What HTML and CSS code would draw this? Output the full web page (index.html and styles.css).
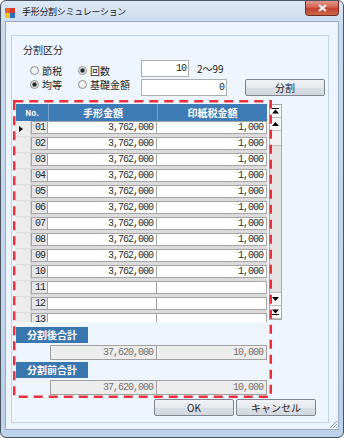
FILE: index.html
```html
<!DOCTYPE html>
<html lang="ja">
<head>
<meta charset="UTF-8" />
<meta name="viewport" content="width=device-width, initial-scale=1.0"/>
<title>手形分割シミュレーション</title>
<link rel="stylesheet" href="styles.css">
</head>
<body>
<div class="janela">
  <div class="barra-titulo">
    <svg class="icone" width="10" height="10" viewBox="0 0 10 10">
      <rect x="0" y="0" width="5" height="5" fill="#e8622a"/>
      <rect x="5" y="0" width="5" height="5" fill="#d23a2a"/>
      <rect x="0" y="5" width="5" height="5" fill="#f4c21c"/>
      <rect x="5" y="5" width="5" height="5" fill="#2f6fc2"/>
    </svg>
    <span class="titulo">手形分割シミュレーション</span>
    <div class="fechar">
      <svg width="9" height="8" viewBox="0 0 9 8"><path d="M1 1 L8 7 M8 1 L1 7" stroke="#fff" stroke-width="2"/></svg>
    </div>
  </div>

  <div class="cliente">
    <div class="painel">
      <div class="legenda">分割区分</div>

      <div class="linha-divisao">
        <div class="radios">
          <label class="radio"><span class="bolinha"></span>節税</label>
          <label class="radio"><span class="bolinha marcada"></span>回数</label>
          <label class="radio"><span class="bolinha marcada"></span>均等</label>
          <label class="radio"><span class="bolinha"></span>基礎金額</label>
        </div>
        <div class="campos">
          <div class="campo-linha">
            <div class="caixa caixa-curta">10</div>
            <span class="faixa">2〜99</span>
          </div>
          <div class="campo-linha campo-linha2">
            <div class="caixa caixa-longa">0</div>
            <button class="botao botao-dividir">分割</button>
          </div>
        </div>
      </div>

      <div class="grade">
        <div class="grade-corpo">
          <div class="cabecalho">
            <div class="cab-no">No.</div>
            <div class="cab">手形金額</div>
            <div class="cab">印紙税金額</div>
          </div>
          <div class="linha"><div class="seletor"><span class="seta"></span></div><div class="celula num">01</div><div class="celula">3,762,000</div><div class="celula">1,000</div></div>
          <div class="linha"><div class="seletor"></div><div class="celula num">02</div><div class="celula">3,762,000</div><div class="celula">1,000</div></div>
          <div class="linha"><div class="seletor"></div><div class="celula num">03</div><div class="celula">3,762,000</div><div class="celula">1,000</div></div>
          <div class="linha"><div class="seletor"></div><div class="celula num">04</div><div class="celula">3,762,000</div><div class="celula">1,000</div></div>
          <div class="linha"><div class="seletor"></div><div class="celula num">05</div><div class="celula">3,762,000</div><div class="celula">1,000</div></div>
          <div class="linha"><div class="seletor"></div><div class="celula num">06</div><div class="celula">3,762,000</div><div class="celula">1,000</div></div>
          <div class="linha"><div class="seletor"></div><div class="celula num">07</div><div class="celula">3,762,000</div><div class="celula">1,000</div></div>
          <div class="linha"><div class="seletor"></div><div class="celula num">08</div><div class="celula">3,762,000</div><div class="celula">1,000</div></div>
          <div class="linha"><div class="seletor"></div><div class="celula num">09</div><div class="celula">3,762,000</div><div class="celula">1,000</div></div>
          <div class="linha"><div class="seletor"></div><div class="celula num">10</div><div class="celula">3,762,000</div><div class="celula">1,000</div></div>
          <div class="linha"><div class="seletor"></div><div class="celula num">11</div><div class="celula"></div><div class="celula"></div></div>
          <div class="linha"><div class="seletor"></div><div class="celula num">12</div><div class="celula"></div><div class="celula"></div></div>
          <div class="linha"><div class="seletor"></div><div class="celula num">13</div><div class="celula"></div><div class="celula"></div></div>
        </div>
        <div class="rolagem">
          <div class="rol-botao">
            <svg width="7" height="6" viewBox="0 0 7 6"><rect x="0" y="0" width="7" height="1" fill="#000"/><path d="M3.5 1.5 L7 5.5 L0 5.5 Z" fill="#000"/></svg>
          </div>
          <div class="rol-botao">
            <svg width="7" height="4" viewBox="0 0 7 4"><path d="M3.5 0 L7 4 L0 4 Z" fill="#000"/></svg>
          </div>
          <div class="rol-polegar"></div>
          <div class="rol-trilho"></div>
          <div class="rol-botao">
            <svg width="7" height="4" viewBox="0 0 7 4"><path d="M0 0 L7 0 L3.5 4 Z" fill="#000"/></svg>
          </div>
          <div class="rol-botao">
            <svg width="7" height="6" viewBox="0 0 7 6"><path d="M0 0.5 L7 0.5 L3.5 4.5 Z" fill="#000"/><rect x="0" y="5" width="7" height="1" fill="#000"/></svg>
          </div>
        </div>
      </div>

      <div class="totais">
        <div class="total-rotulo">分割後合計</div>
        <div class="total-valores">
          <div class="total-caixa total-a">37,620,000</div>
          <div class="total-caixa total-b">10,000</div>
        </div>
        <div class="total-rotulo">分割前合計</div>
        <div class="total-valores">
          <div class="total-caixa total-a">37,620,000</div>
          <div class="total-caixa total-b">10,000</div>
        </div>
      </div>

      <div class="rodape">
        <button class="botao">OK</button>
        <button class="botao">キャンセル</button>
      </div>

      <svg class="marca" width="259" height="298" viewBox="0 0 259 298">
        <rect x="1.25" y="1.25" width="256.5" height="295.5" fill="none" stroke="#e8313a" stroke-width="2.5" stroke-dasharray="9 6"/>
      </svg>
    </div>

    <svg class="alca" width="9" height="9" viewBox="0 0 9 9">
      <path d="M8 1 L1 8 M8 4 L4 8 M8 7 L7 8" stroke="#8c9aab" stroke-width="1"/>
    </svg>
  </div>
</div>
</body>
</html>
```

FILE: styles.css
```css
* {
  box-sizing: border-box;
}
body {
  margin: 0;
  width: 344px;
  height: 438px;
  overflow: hidden;
  font-family: "Noto Sans CJK JP", sans-serif;
  font-size: 10px;
  color: #1e1e1e;
  background: #ffffff;
}
.janela {
  width: 344px;
  height: 438px;
  border: 1px solid #4a5360;
  border-radius: 6px;
  background: linear-gradient(180deg, #dce8f5 0, #cbdcef 22px, #bcd1ea 100%);
  display: flex;
  flex-direction: column;
}
.barra-titulo {
  height: 20px;
  display: flex;
  align-items: flex-start;
  padding-left: 4px;
}
.icone {
  margin-top: 7px;
  flex: none;
}
.titulo {
  margin-left: 7px;
  line-height: 22px;
  font-size: 9px;
  letter-spacing: -0.3px;
  color: #1a1a1a;
}
.fechar {
  margin-left: auto;
  margin-right: 4px;
  width: 34px;
  height: 15px;
  border: 1px solid #6e2a22;
  border-top: none;
  border-radius: 0 0 4px 4px;
  background: linear-gradient(180deg, #e3998b 0, #d2604f 45%, #c2402f 55%, #cf6a4c 100%);
  display: flex;
  align-items: center;
  justify-content: center;
}
.cliente {
  flex: 1;
  margin: 0 4px 7px 4px;
  border: 1px solid #98abc2;
  background: #eef4fb;
  padding: 13px 9px 6px 5px;
  display: flex;
  position: relative;
}
.painel {
  flex: 1;
  border: 1px solid #c0d3e8;
  background: #eff5fc;
  position: relative;
}
.legenda {
  margin-top: 7px;
  padding-left: 11px;
  line-height: 14px;
}
.linha-divisao {
  display: flex;
  margin-left: 11px;
}
.radios {
  width: 118px;
  padding-left: 7px;
  margin-top: 6px;
  display: grid;
  grid-template-columns: 48px auto;
  grid-auto-rows: 14px;
}
.radio {
  display: flex;
  align-items: center;
  gap: 3px;
}
.bolinha {
  width: 9px;
  height: 9px;
  flex: none;
  border: 1px solid #8f8f8f;
  border-radius: 50%;
  background: radial-gradient(circle, #ffffff 0, #e4e4e4 100%);
}
.bolinha.marcada {
  background: radial-gradient(circle, #2a2a2a 0, #2a2a2a 1.6px, #b5b5b5 2.4px, #f4f4f4 3.2px);
}
.campos {
  margin-top: 3px;
}
.campo-linha {
  display: flex;
  align-items: center;
}
.campo-linha2 {
  margin-top: 2px;
}
.caixa {
  height: 17px;
  border: 1px solid #abadb3;
  background: #ffffff;
  text-align: right;
  padding-right: 2px;
  font-family: "Liberation Mono", monospace;
  font-size: 10px;
  letter-spacing: -1px;
  line-height: 15px;
}
.caixa-curta {
  width: 48px;
}
.caixa-longa {
  width: 86px;
}
.faixa {
  margin-left: 8px;
}
.botao {
  width: 80px;
  height: 17px;
  padding: 0;
  border: 1px solid #7f858c;
  border-radius: 2px;
  background: linear-gradient(180deg, #f1f3f5 0, #e6e9ed 50%, #d9dee4 51%, #d3d8de 100%);
  font-family: "Noto Sans CJK JP", sans-serif;
  font-size: 10px;
  line-height: 15px;
  color: #1e1e1e;
}
.botao-dividir {
  margin-left: 18px;
  margin-top: -1px;
}
.grade {
  display: flex;
  margin: 8px 0 0 4px;
  height: 218px;
}
.grade-corpo {
  width: 251px;
  height: 218px;
  overflow: hidden;
  background: #dcdcdc;
}
.cabecalho {
  display: grid;
  grid-template-columns: 32px 109px 110px;
  height: 17px;
  background: #3f7bb6;
  color: #ffffff;
  font-weight: bold;
  text-align: center;
  line-height: 17px;
}
.cab {
  border-left: 1px solid #79a3cf;
}
.cab-no {
  font-size: 8px;
}
.linha {
  display: grid;
  grid-template-columns: 15px 17px 109px 110px;
  height: 16px;
}
.seletor {
  height: 15px;
  background: #ececec;
  border-right: 1px solid #d2d2d2;
  display: flex;
  align-items: center;
  padding-left: 3px;
}
.seta {
  width: 0;
  height: 0;
  border-top: 3px solid transparent;
  border-bottom: 3px solid transparent;
  border-left: 4px solid #111111;
}
.celula {
  height: 13px;
  border: 1px solid #a5a5a5;
  background: #ffffff;
  text-align: right;
  padding-right: 3px;
  font-family: "Liberation Mono", monospace;
  font-size: 10px;
  letter-spacing: -1px;
  line-height: 11px;
  color: #2a2a2a;
}
.celula + .celula {
  margin-left: -1px;
}
.celula.num {
  background: #e6e6e6;
  text-align: left;
  padding-left: 3px;
}
.rolagem {
  width: 13px;
  height: 216px;
  margin-left: 2px;
  border: 1px solid #a9a9a9;
  background: #e3e3e3;
  display: flex;
  flex-direction: column;
}
.rol-botao {
  height: 13px;
  flex: none;
  background: #f7f7f7;
  border-bottom: 1px solid #bdbdbd;
  display: flex;
  align-items: center;
  justify-content: center;
}
.rol-polegar {
  height: 15px;
  flex: none;
  background: #f2f2f2;
  border-bottom: 1px solid #bdbdbd;
}
.rol-trilho {
  flex: 1;
  border-bottom: 1px solid #bdbdbd;
}
.totais {
  margin: 5px 0 0 4px;
}
.total-rotulo {
  width: 72px;
  height: 16px;
  background: #3b77af;
  color: #ffffff;
  font-weight: bold;
  text-align: center;
  line-height: 16px;
}
.total-valores {
  display: flex;
  margin: 2px 0 2px 34px;
}
.total-caixa {
  height: 15px;
  border: 1px solid #a0a0a0;
  background: #ededed;
  color: #707070;
  text-align: right;
  padding-right: 3px;
  font-family: "Liberation Mono", monospace;
  font-size: 10px;
  letter-spacing: -1px;
  line-height: 13px;
}
.total-a {
  width: 107px;
}
.total-b {
  width: 111px;
  margin-left: -1px;
}
.rodape {
  display: flex;
  justify-content: flex-end;
  gap: 2px;
  padding-right: 12px;
  margin-top: 4px;
}
.marca {
  position: absolute;
  left: 1px;
  top: 64px;
}
.alca {
  position: absolute;
  right: 0;
  bottom: 0;
}
```
